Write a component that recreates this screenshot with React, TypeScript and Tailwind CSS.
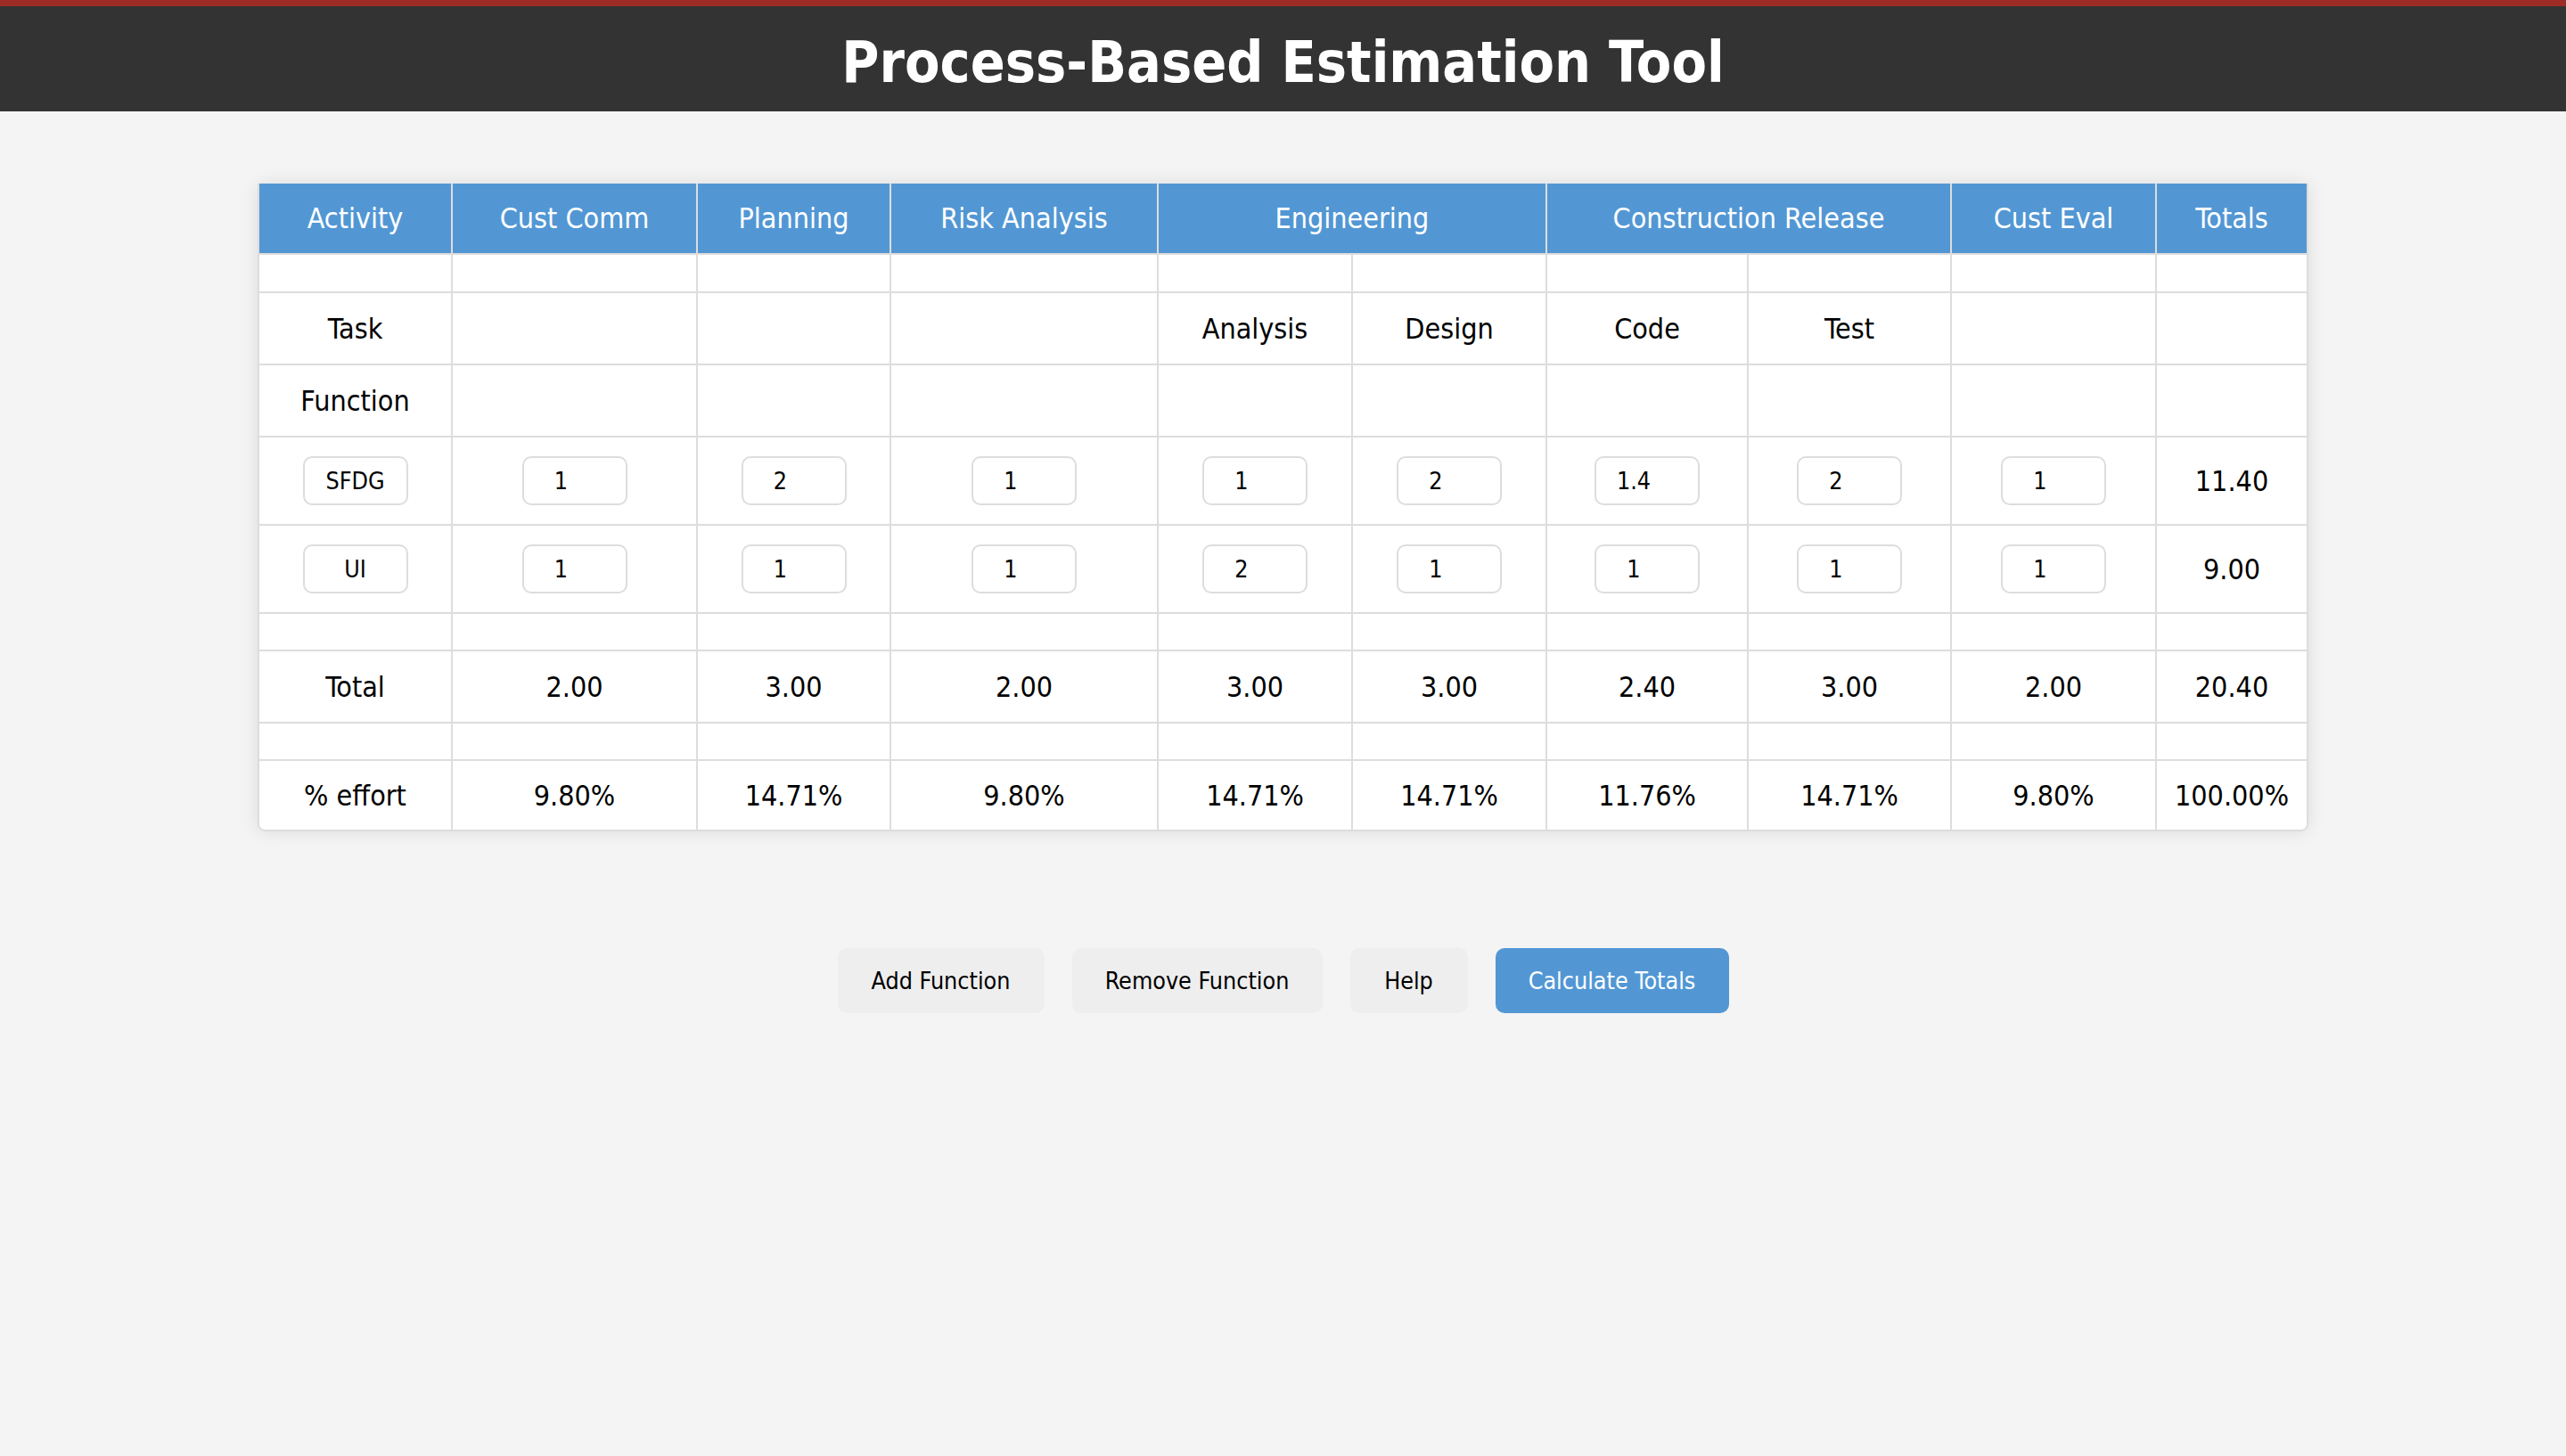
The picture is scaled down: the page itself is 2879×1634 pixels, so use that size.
import React, { useState } from "react";

type Fn = { name: string; values: string[] };

const FONT = { fontFamily: '"DejaVu Sans Condensed", "DejaVu Sans", sans-serif' };

const cell = "flex items-center justify-center bg-white text-black text-[32px]";
const head = "flex items-center justify-center bg-[#5297d4] text-white text-[32px] h-[78px]";

function fmt(n: number) {
  return n.toFixed(2);
}

export default function App() {
  const [fns, setFns] = useState<Fn[]>([
    { name: "SFDG", values: ["1", "2", "1", "1", "2", "1.4", "2", "1"] },
    { name: "UI", values: ["1", "1", "1", "2", "1", "1", "1", "1"] },
  ]);

  const num = (s: string) => {
    const v = parseFloat(s);
    return isNaN(v) ? 0 : v;
  };

  const rowTotals = fns.map((f) => f.values.reduce((a, v) => a + num(v), 0));
  const colTotals = Array.from({ length: 8 }, (_, i) =>
    fns.reduce((a, f) => a + num(f.values[i]), 0)
  );
  const grand = colTotals.reduce((a, b) => a + b, 0);

  const update = (fi: number, vi: number, v: string) => {
    setFns((prev) =>
      prev.map((f, i) =>
        i === fi ? { ...f, values: f.values.map((x, j) => (j === vi ? v : x)) } : f
      )
    );
  };
  const updateName = (fi: number, v: string) => {
    setFns((prev) => prev.map((f, i) => (i === fi ? { ...f, name: v } : f)));
  };

  const emptyRow = (h: string, key: string) =>
    Array.from({ length: 10 }, (_, i) => <div key={key + i} className={`${cell} ${h}`} />);

  const tasks = ["", "", "", "", "Analysis", "Design", "Code", "Test", "", ""];

  return (
    <div className="min-h-screen bg-[#f4f4f4]" style={FONT}>
      <header className="h-[125px] border-t-[7px] border-[#9d2b26] bg-[#333333] pt-[8px] flex items-center justify-center">
        <h1 className="text-white text-[64px] font-bold leading-normal">Process-Based Estimation Tool</h1>
      </header>

      <main className="mt-[81px] flex flex-col items-center">
        <div className="w-[2301px] rounded-[8px] bg-white shadow-[0_0_20px_rgba(0,0,0,0.1)]">
          <div className="grid grid-cols-[215px_273px_215px_298px_216px_216px_224px_226px_228px_168px] gap-[2px] bg-[#dddddd] border-x-2 border-b-2 border-[#dddddd] rounded-b-[8px] overflow-hidden">
            <div className={head}>Activity</div>
            <div className={head}>Cust Comm</div>
            <div className={head}>Planning</div>
            <div className={head}>Risk Analysis</div>
            <div className={`${head} col-span-2`}>Engineering</div>
            <div className={`${head} col-span-2`}>Construction Release</div>
            <div className={head}>Cust Eval</div>
            <div className={head}>Totals</div>

            {emptyRow("h-[41px]", "e1")}

            {tasks.map((t, i) => (
              <div key={"t" + i} className={`${cell} h-[79px]`}>
                {i === 0 ? "Task" : t}
              </div>
            ))}

            {Array.from({ length: 10 }, (_, i) => (
              <div key={"f" + i} className={`${cell} h-[79px]`}>
                {i === 0 ? "Function" : ""}
              </div>
            ))}

            {fns.map((f, fi) => (
              <React.Fragment key={"fn" + fi}>
                <div className={`${cell} h-[97px]`}>
                  <input
                    type="text"
                    value={f.name}
                    onChange={(e) => updateName(fi, e.target.value)}
                    className="w-[118px] h-[55px] rounded-[10px] border-2 border-[#dddddd] bg-white px-[10px] text-center text-[26.67px] text-black outline-none"
                    style={FONT}
                  />
                </div>
                {f.values.map((v, vi) => (
                  <div key={"v" + vi} className={`${cell} h-[97px]`}>
                    <input
                      type="text"
                      inputMode="decimal"
                      value={v}
                      onChange={(e) => update(fi, vi, e.target.value)}
                      className="w-[118px] h-[55px] rounded-[10px] border-2 border-[#dddddd] bg-white pl-[10px] pr-[40px] text-center text-[26.67px] text-black outline-none"
                      style={FONT}
                    />
                  </div>
                ))}
                <div className={`${cell} h-[97px]`}>{fmt(rowTotals[fi])}</div>
              </React.Fragment>
            ))}

            {emptyRow("h-[40px]", "e2")}

            <div className={`${cell} h-[79px]`}>Total</div>
            {colTotals.map((c, i) => (
              <div key={"ct" + i} className={`${cell} h-[79px]`}>
                {fmt(c)}
              </div>
            ))}
            <div className={`${cell} h-[79px]`}>{fmt(grand)}</div>

            {emptyRow("h-[40px]", "e3")}

            <div className={`${cell} h-[77px]`}>% effort</div>
            {colTotals.map((c, i) => (
              <div key={"pe" + i} className={`${cell} h-[77px]`}>
                {grand ? fmt((c / grand) * 100) : "0.00"}%
              </div>
            ))}
            <div className={`${cell} h-[77px]`}>{grand ? "100.00" : "0.00"}%</div>
          </div>
        </div>

        <div className="mt-[131px] flex items-center justify-center gap-[31px]">
          <button
            onClick={() =>
              setFns((p) => [...p, { name: "", values: ["0", "0", "0", "0", "0", "0", "0", "0"] }])
            }
            className="w-[232px] h-[73px] rounded-[10px] bg-[#eeeeee] text-black text-[26.67px]"
            style={FONT}
          >
            Add Function
          </button>
          <button
            onClick={() => setFns((p) => (p.length > 1 ? p.slice(0, -1) : p))}
            className="w-[281px] h-[73px] rounded-[10px] bg-[#eeeeee] text-black text-[26.67px]"
            style={FONT}
          >
            Remove Function
          </button>
          <button
            className="w-[132px] h-[73px] rounded-[10px] bg-[#eeeeee] text-black text-[26.67px]"
            style={FONT}
          >
            Help
          </button>
          <button
            className="w-[262px] h-[73px] rounded-[10px] bg-[#5297d4] text-white text-[26.67px]"
            style={FONT}
          >
            Calculate Totals
          </button>
        </div>
      </main>
    </div>
  );
}
